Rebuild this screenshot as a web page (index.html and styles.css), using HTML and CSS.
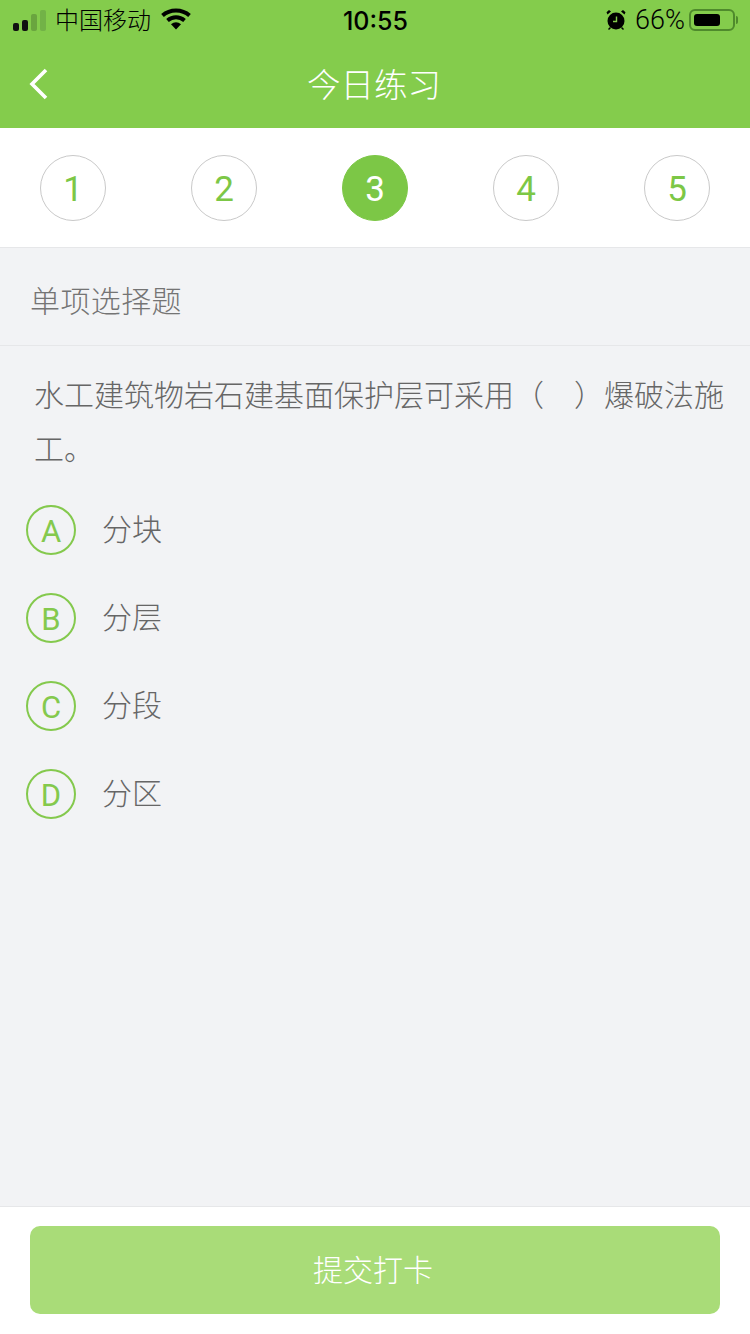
FILE: index.html
```html
<!DOCTYPE html>
<html lang="zh-CN">
  <head>
    <meta charset="UTF-8" />
    <meta name="viewport" content="width=device-width, initial-scale=1.0" />
    <title>今日练习</title>
    <link rel="stylesheet" href="styles.css">
  </head>
  <body>
    <div class="page">
      <header class="top">
        <!-- status bar -->
        <div class="status">
          <div class="status-left">
            <svg class="signal" width="34" height="21" viewBox="0 0 34 21">
              <rect x="0" y="13" width="6" height="8" rx="2" fill="#111"/>
              <rect x="9" y="10" width="6" height="11" rx="2" fill="#111"/>
              <rect x="18" y="4" width="6" height="17" rx="2" fill="#6aa53f"/>
              <rect x="27" y="0" width="6" height="21" rx="2" fill="#72b247"/>
            </svg>
            <span class="carrier">中国移动</span>
            <svg class="wifi" width="30" height="22" viewBox="0 0 30 22">
              <path d="M1.500 7.500C9 .8 21 .8 28.500 7.500" fill="none" stroke="#000" stroke-width="4"/>
              <path d="M6.500 12.500C11.500 8.200 18.500 8.200 23.500 12.500" fill="none" stroke="#000" stroke-width="4"/>
              <path d="M10 16.300C13 13.500 17 13.500 20 16.300L15 21.500Z" fill="#000"/>
            </svg>
          </div>
          <div class="clock">10:55</div>
          <div class="status-right">
            <svg class="alarm" width="22" height="22" viewBox="0 0 22 22">
              <circle cx="11" cy="12" r="8.500" fill="#000"/>
              <path d="M2.500 5.500 6 2.500 4 1 1.500 3.200ZM19.500 5.500 16 2.500 18 1 20.500 3.200Z" fill="#000"/>
              <path d="M3.500 20.500 5.500 18.500M18.500 20.500 16.500 18.500" stroke="#000" stroke-width="1.500"/>
              <path d="M11.500 7.500v5H8" fill="none" stroke="#84cc4c" stroke-width="1.400"/>
            </svg>
            <span class="percent">66%</span>
            <div class="battery"><div class="battery-level"></div></div>
            <div class="battery-cap"></div>
          </div>
        </div>
        <!-- nav bar -->
        <nav class="nav">
          <svg class="back" width="20" height="32" viewBox="0 0 20 32">
            <path d="M17 2 3 16l14 14" fill="none" stroke="#fff" stroke-width="3.600"/>
          </svg>
          <h1 class="nav-title">今日练习</h1>
        </nav>
      </header>

      <div class="steps">
        <div class="step">1</div>
        <div class="step">2</div>
        <div class="step step-active">3</div>
        <div class="step">4</div>
        <div class="step">5</div>
      </div>

      <main class="content">
        <div class="type">单项选择题</div>
        <p class="question">水工建筑物岩石建基面保护层可采用（　）爆破法施工。</p>
        <ul class="options">
          <li class="option"><span class="letter">A</span><span class="option-text">分块</span></li>
          <li class="option"><span class="letter">B</span><span class="option-text">分层</span></li>
          <li class="option"><span class="letter">C</span><span class="option-text">分段</span></li>
          <li class="option"><span class="letter">D</span><span class="option-text">分区</span></li>
        </ul>
      </main>

      <footer class="bottom">
        <button class="submit" type="button">提交打卡</button>
      </footer>
    </div>
  </body>
</html>
```

FILE: styles.css
```css
* {
  box-sizing: border-box;
}

body {
  margin: 0;
  font-family: "Noto Sans CJK SC", sans-serif;
  background-color: #f2f3f5;
}

.page {
  display: flex;
  flex-direction: column;
  height: 1334px;
  overflow: hidden;
}

.top {
  height: 128px;
  background-color: #84cc4c;
}

.status {
  display: flex;
  align-items: center;
  justify-content: space-between;
  height: 40px;
  padding: 0 12px 0 13px;
  color: #000;
}

.status-left,
.status-right {
  display: flex;
  align-items: center;
  width: 200px;
}

.status-right {
  justify-content: flex-end;
}

.carrier {
  margin-left: 8px;
  padding-bottom: 4px;
  font-size: 24px;
  font-weight: 300;
}

.wifi {
  margin-left: 10px;
  margin-bottom: 2px;
}

.clock {
  padding-top: 2px;
  font-size: 25px;
  font-weight: 500;
  font-family: Inter, "Liberation Sans", sans-serif;
}

.percent {
  margin-left: 8px;
  font-size: 27px;
  font-family: Roboto, sans-serif;
  font-weight: 300;
}

.battery {
  width: 46px;
  height: 22px;
  margin-left: 4px;
  padding: 3px;
  border: 2px solid #4f8a2c;
  border-radius: 6px;
}

.battery-level {
  width: 26px;
  height: 100%;
  border-radius: 3px;
  background-color: #000;
}

.battery-cap {
  width: 2px;
  height: 8px;
  margin-left: 1px;
  border-radius: 0 2px 2px 0;
  background-color: #4f8a2c;
}

.nav {
  position: relative;
  display: flex;
  align-items: center;
  justify-content: center;
  height: 88px;
}

.back {
  position: absolute;
  left: 29px;
  top: 28px;
}

.nav-title {
  margin: 0 0 0 -2px;
  padding-bottom: 4px;
  font-size: 33.5px;
  font-weight: 300;
  color: #fff;
}

.steps {
  display: flex;
  justify-content: space-between;
  height: 120px;
  padding: 27px 40px 0;
  background-color: #fff;
  border-bottom: 1px solid #e6e7e9;
}

.step {
  display: flex;
  align-items: center;
  justify-content: center;
  width: 66px;
  height: 66px;
  padding-top: 2px;
  border: 1px solid #c9c9c9;
  border-radius: 50%;
  font-size: 35px;
  font-family: Roboto, sans-serif;
  color: #7cc746;
}

.step-active {
  border-color: #7cc746;
  background-color: #7cc746;
  color: #fff;
}

.content {
  flex: 1;
}

.type {
  height: 98px;
  padding: 0 30px;
  border-bottom: 1px solid #e6e7e9;
  font-size: 30px;
  line-height: 103px;
  letter-spacing: 0.4px;
  font-weight: 300;
  color: #747474;
}

.question {
  margin: 0;
  padding: 20px 20px 0 34px;
  font-size: 30px;
  line-height: 54px;
  font-weight: 300;
  color: #666;
}

.options {
  margin: 12px 0 0;
  padding: 0 0 0 26px;
  list-style: none;
}

.option {
  display: flex;
  align-items: center;
  height: 88px;
}

.letter {
  display: flex;
  align-items: center;
  justify-content: center;
  width: 50px;
  height: 50px;
  padding-top: 2px;
  border: 2px solid #84c94d;
  border-radius: 50%;
  font-size: 31px;
  font-family: Roboto, sans-serif;
  color: #84c94d;
}

.option-text {
  margin-left: 26px;
  padding-bottom: 6px;
  font-size: 30px;
  font-weight: 300;
  color: #666;
}

.bottom {
  height: 128px;
  padding: 19px 30px 0;
  background-color: #fff;
  border-top: 1px solid #e6e7e9;
}

.submit {
  display: block;
  width: 100%;
  height: 88px;
  padding: 0 4px 4px 0;
  border: 0;
  border-radius: 10px;
  background-color: #a9dc78;
  font-size: 30px;
  font-weight: 300;
  color: #fff;
  font-family: "Noto Sans CJK SC", sans-serif;
}
```
